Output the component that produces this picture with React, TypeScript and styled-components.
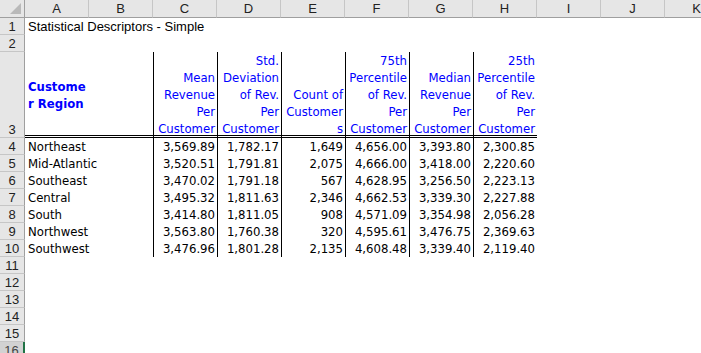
import React from "react";
import styled, { createGlobalStyle } from "styled-components";

const Global = createGlobalStyle`
  html, body { margin: 0; padding: 0; background: #fff; overflow: hidden; }
  #root { width: 701px; height: 353px; overflow: hidden; }
`;

const COLS = ["A", "B", "C", "D", "E", "F", "G", "H", "I", "J", "K"];

const Sheet = styled.div`
  display: grid;
  grid-template-columns: 25px repeat(11, 64px);
  grid-template-rows: 18px 17px 17px 86px repeat(13, 17px);
  width: 729px;
  font-family: Tahoma, "DejaVu Sans Condensed", "DejaVu Sans", sans-serif;
  font-size: 13px;
  color: #000;
`;

const Corner = styled.div`
  background: #e6e6e6;
  border-right: 1px solid #9f9f9f;
  border-bottom: 1px solid #9f9f9f;
  box-sizing: border-box;
  display: flex;
  align-items: flex-end;
  justify-content: flex-end;
  padding: 0 3px 3px 0;
`;

const Triangle = styled.div`
  width: 0;
  height: 0;
  border-left: 11px solid transparent;
  border-bottom: 11px solid #b9b9b9;
`;

const ColHead = styled.div`
  background: #e6e6e6;
  border-right: 1px solid #c6c6c6;
  border-bottom: 1px solid #9f9f9f;
  box-sizing: border-box;
  display: flex;
  align-items: center;
  justify-content: center;
  font-family: "Liberation Sans", Arial, sans-serif;
  font-size: 13px;
  color: #222;
`;

const RowHead = styled.div<{ $active?: boolean; $bottom?: boolean }>`
  background: ${(p) => (p.$active ? "#d2d2d2" : "#e6e6e6")};
  border-right: ${(p) => (p.$active ? "2px solid #217346" : "1px solid #9f9f9f")};
  border-bottom: 1px solid #c6c6c6;
  box-sizing: border-box;
  display: flex;
  align-items: ${(p) => (p.$bottom ? "flex-end" : "center")};
  justify-content: center;
  font-family: "Liberation Sans", Arial, sans-serif;
  font-size: 13px;
  color: ${(p) => (p.$active ? "#444" : "#222")};
`;

const Cell = styled.div<{
  $align?: "left" | "right";
  $bl?: boolean;
  $dbl?: boolean;
}>`
  box-sizing: border-box;
  min-width: 0;
  overflow: visible;
  white-space: nowrap;
  line-height: 17px;
  padding: ${(p) => (p.$align === "right" ? "0 2px 0 0" : "0 0 0 3px")};
  text-align: ${(p) => p.$align ?? "left"};
  border-left: ${(p) => (p.$bl ? "1px solid #000" : "none")};
  border-bottom: ${(p) => (p.$dbl ? "3px double #000" : "none")};
  position: relative;
  z-index: ${(p) => (p.$align === "left" ? 1 : 0)};
`;

const Title = styled(Cell)`
  font-family: "Liberation Sans", Arial, sans-serif;
  font-size: 13px;
`;

const HeadCell = styled(Cell)`
  display: flex;
  flex-direction: column;
  justify-content: flex-end;
  align-items: flex-end;
  color: #0000ff;
  overflow: hidden;
`;

const RegionHead = styled(Cell)`
  display: flex;
  flex-direction: column;
  justify-content: center;
  color: #0000ff;
  font-weight: bold;
  padding-top: 3px;
`;

const Line = styled.div<{ $last?: boolean }>`
  line-height: 17px;
  white-space: nowrap;
  margin-bottom: ${(p) => (p.$last ? "-2px" : "0")};
`;

const headers: string[][] = [
  ["Mean", "Revenue", "Per", "Customer"],
  ["Std.", "Deviation", "of Rev.", "Per", "Customer"],
  ["Count of", "Customer", "s"],
  ["75th", "Percentile", "of Rev.", "Per", "Customer"],
  ["Median", "Revenue", "Per", "Customer"],
  ["25th", "Percentile", "of Rev.", "Per", "Customer"],
];

const data: [string, string[]][] = [
  ["Northeast", ["3,569.89", "1,782.17", "1,649", "4,656.00", "3,393.80", "2,300.85"]],
  ["Mid-Atlantic", ["3,520.51", "1,791.81", "2,075", "4,666.00", "3,418.00", "2,220.60"]],
  ["Southeast", ["3,470.02", "1,791.18", "567", "4,628.95", "3,256.50", "2,223.13"]],
  ["Central", ["3,495.32", "1,811.63", "2,346", "4,662.53", "3,339.30", "2,227.88"]],
  ["South", ["3,414.80", "1,811.05", "908", "4,571.09", "3,354.98", "2,056.28"]],
  ["Northwest", ["3,563.80", "1,760.38", "320", "4,595.61", "3,476.75", "2,369.63"]],
  ["Southwest", ["3,476.96", "1,801.28", "2,135", "4,608.48", "3,339.40", "2,119.40"]],
];

const Empties = ({ n }: { n: number }) => (
  <>
    {Array.from({ length: n }, (_, i) => (
      <Cell key={i} />
    ))}
  </>
);

export default function App() {
  return (
    <>
      <Global />
      <Sheet>
        <Corner>
          <Triangle />
        </Corner>
        {COLS.map((c) => (
          <ColHead key={c}>{c}</ColHead>
        ))}

        <RowHead>1</RowHead>
        <Title>Statistical Descriptors - Simple</Title>
        <Empties n={10} />

        <RowHead>2</RowHead>
        <Empties n={11} />

        <RowHead $bottom>3</RowHead>
        <RegionHead $dbl>
          <Line>Custome</Line>
          <Line>r Region</Line>
        </RegionHead>
        <Cell $dbl />
        {headers.map((lines, i) => (
          <HeadCell key={i} $align="right" $bl $dbl>
            {lines.map((l, j) => (
              <Line key={j} $last={j === lines.length - 1}>
                {l}
              </Line>
            ))}
          </HeadCell>
        ))}
        <Empties n={3} />

        {data.map(([region, vals], r) => (
          <React.Fragment key={region}>
            <RowHead>{r + 4}</RowHead>
            <Cell $align="left">{region}</Cell>
            <Cell />
            {vals.map((v, i) => (
              <Cell key={i} $align="right" $bl>
                {v}
              </Cell>
            ))}
            <Empties n={3} />
          </React.Fragment>
        ))}

        {[11, 12, 13, 14, 15, 16].map((n) => (
          <React.Fragment key={n}>
            <RowHead $active={n === 16}>{n}</RowHead>
            <Empties n={11} />
          </React.Fragment>
        ))}
      </Sheet>
    </>
  );
}
